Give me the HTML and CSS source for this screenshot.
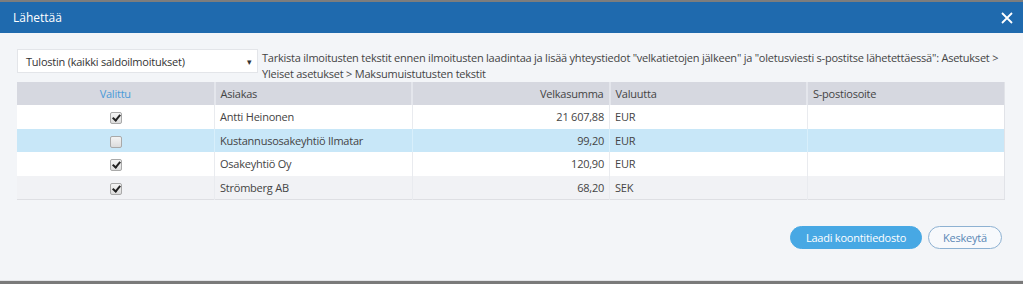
FILE: index.html
```html
<!DOCTYPE html>
<html>
<head>
    <meta charset="utf-8">
    <title>Lähettää</title>
    <link rel="stylesheet" href="styles.css">
</head>
<body>

<div class="dialog">
    <div class="dialog-head">
        <span class="dialog-title">Lähettää</span>
        <span class="dialog-close">
            <svg width="12" height="12" viewBox="0 0 12 12">
                <path d="M1 1 L11 11 M11 1 L1 11" stroke="#fff" stroke-width="1.8" fill="none"/>
            </svg>
        </span>
    </div>

    <div class="dialog-body">
        <div class="options">
            <div class="select">
                <span>Tulostin (kaikki saldoilmoitukset)</span>
                <span class="select-arrow">&#9662;</span>
            </div>
            <p class="info">Tarkista ilmoitusten tekstit ennen ilmoitusten laadintaa ja lisää yhteystiedot "velkatietojen jälkeen" ja "oletusviesti s-postitse lähetettäessä": Asetukset &gt; Yleiset asetukset &gt; Maksumuistutusten tekstit</p>
        </div>

        <table class="grid">
            <thead>
            <tr>
                <th class="col-check">Valittu</th>
                <th>Asiakas</th>
                <th class="num">Velkasumma</th>
                <th>Valuutta</th>
                <th>S-postiosoite</th>
            </tr>
            </thead>
            <tbody>
            <tr>
                <td class="col-check"><span class="check checked"></span></td>
                <td>Antti Heinonen</td>
                <td class="num">21 607,88</td>
                <td>EUR</td>
                <td></td>
            </tr>
            <tr class="selected">
                <td class="col-check"><span class="check"></span></td>
                <td>Kustannusosakeyhtiö Ilmatar</td>
                <td class="num">99,20</td>
                <td>EUR</td>
                <td></td>
            </tr>
            <tr>
                <td class="col-check"><span class="check checked"></span></td>
                <td>Osakeyhtiö Oy</td>
                <td class="num">120,90</td>
                <td>EUR</td>
                <td></td>
            </tr>
            <tr class="alt">
                <td class="col-check"><span class="check checked"></span></td>
                <td>Strömberg AB</td>
                <td class="num">68,20</td>
                <td>SEK</td>
                <td></td>
            </tr>
            </tbody>
        </table>

        <div class="actions">
            <button type="button" class="btn btn-primary">Laadi koontitiedosto</button>
            <button type="button" class="btn btn-cancel">Keskeytä</button>
        </div>
    </div>
</div>

</body>
</html>
```

FILE: styles.css
```css
*{
    padding: 0;
    margin: 0;
    box-sizing: border-box;
}

html, body{
    height: 100%;
}

body{
    font-family: "Open Sans", "Noto Sans", sans-serif;
    font-size: 11px;
    letter-spacing: -0.23px;
    color: #444;
    background-color: #7a7a7a;
}

.dialog{
    height: 281px;
    border-top: 2px solid #7d7d7d;
    background-color: #f3f5f8;
    border-bottom: 1px solid #e2e3e6;
}

.dialog-head{
    height: 31px;
    display: flex;
    align-items: center;
    justify-content: space-between;
    padding: 0 10px 0 13px;
    background-color: #1f6aae;
    color: #fff;
}

.dialog-title{
    font-size: 12px;
    letter-spacing: 0;
    padding-bottom: 1px;
}

.dialog-close{
    display: flex;
}

.dialog-body{
    padding: 16px 8px 0 17px;
}

.options{
    display: flex;
    align-items: flex-start;
}

.select{
    flex: 0 0 241px;
    height: 24px;
    display: flex;
    align-items: center;
    justify-content: space-between;
    padding: 0 5px 0 8px;
    background-color: #fff;
    border: 1px solid #e3e5e9;
    color: #333;
}

.select-arrow{
    font-size: 9px;
    color: #333;
}

.info{
    margin-left: 4px;
    padding-top: 1px;
    line-height: 16px;
}

/*表格*/
.grid{
    width: 988px;
    table-layout: fixed;
    border-collapse: collapse;
    border-right: 1px solid #e1e3e8;
    border-bottom: 1px solid #dedfe3;
}

.grid th{
    height: 23px;
    padding: 0 5px;
    font-weight: normal;
    text-align: left;
    background-color: #d6d8e0;
    border-left: 2px solid #e4e6ec;
    color: #444;
}

.grid th:first-child{
    border-left: none;
}

.grid td{
    height: 23.5px;
    padding: 0 5px;
    background-color: #fff;
    border-left: 1px solid #e9ebef;
    color: #444;
}

.grid td:first-child{
    border-left: none;
}

.grid .num{
    text-align: right;
}

.grid .col-check{
    text-align: center;
}

.grid th.col-check{
    color: #4a9ad8;
}

.grid tr.selected td{
    background-color: #c8e7f8;
    border-left-color: #d8effb;
}

.grid tr.alt td{
    background-color: #f1f2f5;
}

.check{
    display: inline-block;
    width: 12px;
    height: 12px;
    vertical-align: middle;
    border: 1px solid #a9a9a9;
    border-radius: 2px;
    background: linear-gradient(#f4f4f4, #dcdcdc);
    position: relative;
}

/*勾选标记*/
.check.checked::after{
    content: "";
    position: absolute;
    left: 3px;
    top: 0px;
    width: 3px;
    height: 6px;
    border: solid #222;
    border-width: 0 2px 2px 0;
    transform: rotate(40deg);
}

.actions{
    display: flex;
    justify-content: flex-end;
    gap: 6px;
    margin-top: 26px;
    padding-right: 13px;
}

.btn{
    height: 23px;
    border-radius: 12px;
    font-family: inherit;
    font-size: 11px;
    letter-spacing: -0.23px;
    white-space: nowrap;
    padding: 0;
}

.btn-primary{
    width: 132px;
    background-color: #47a8e4;
    border: 1px solid #47a8e4;
    color: #fff;
}

.btn-cancel{
    width: 74px;
    background-color: #f7f9fc;
    border: 1px solid #8db1d2;
    color: #5a87b6;
}
```
